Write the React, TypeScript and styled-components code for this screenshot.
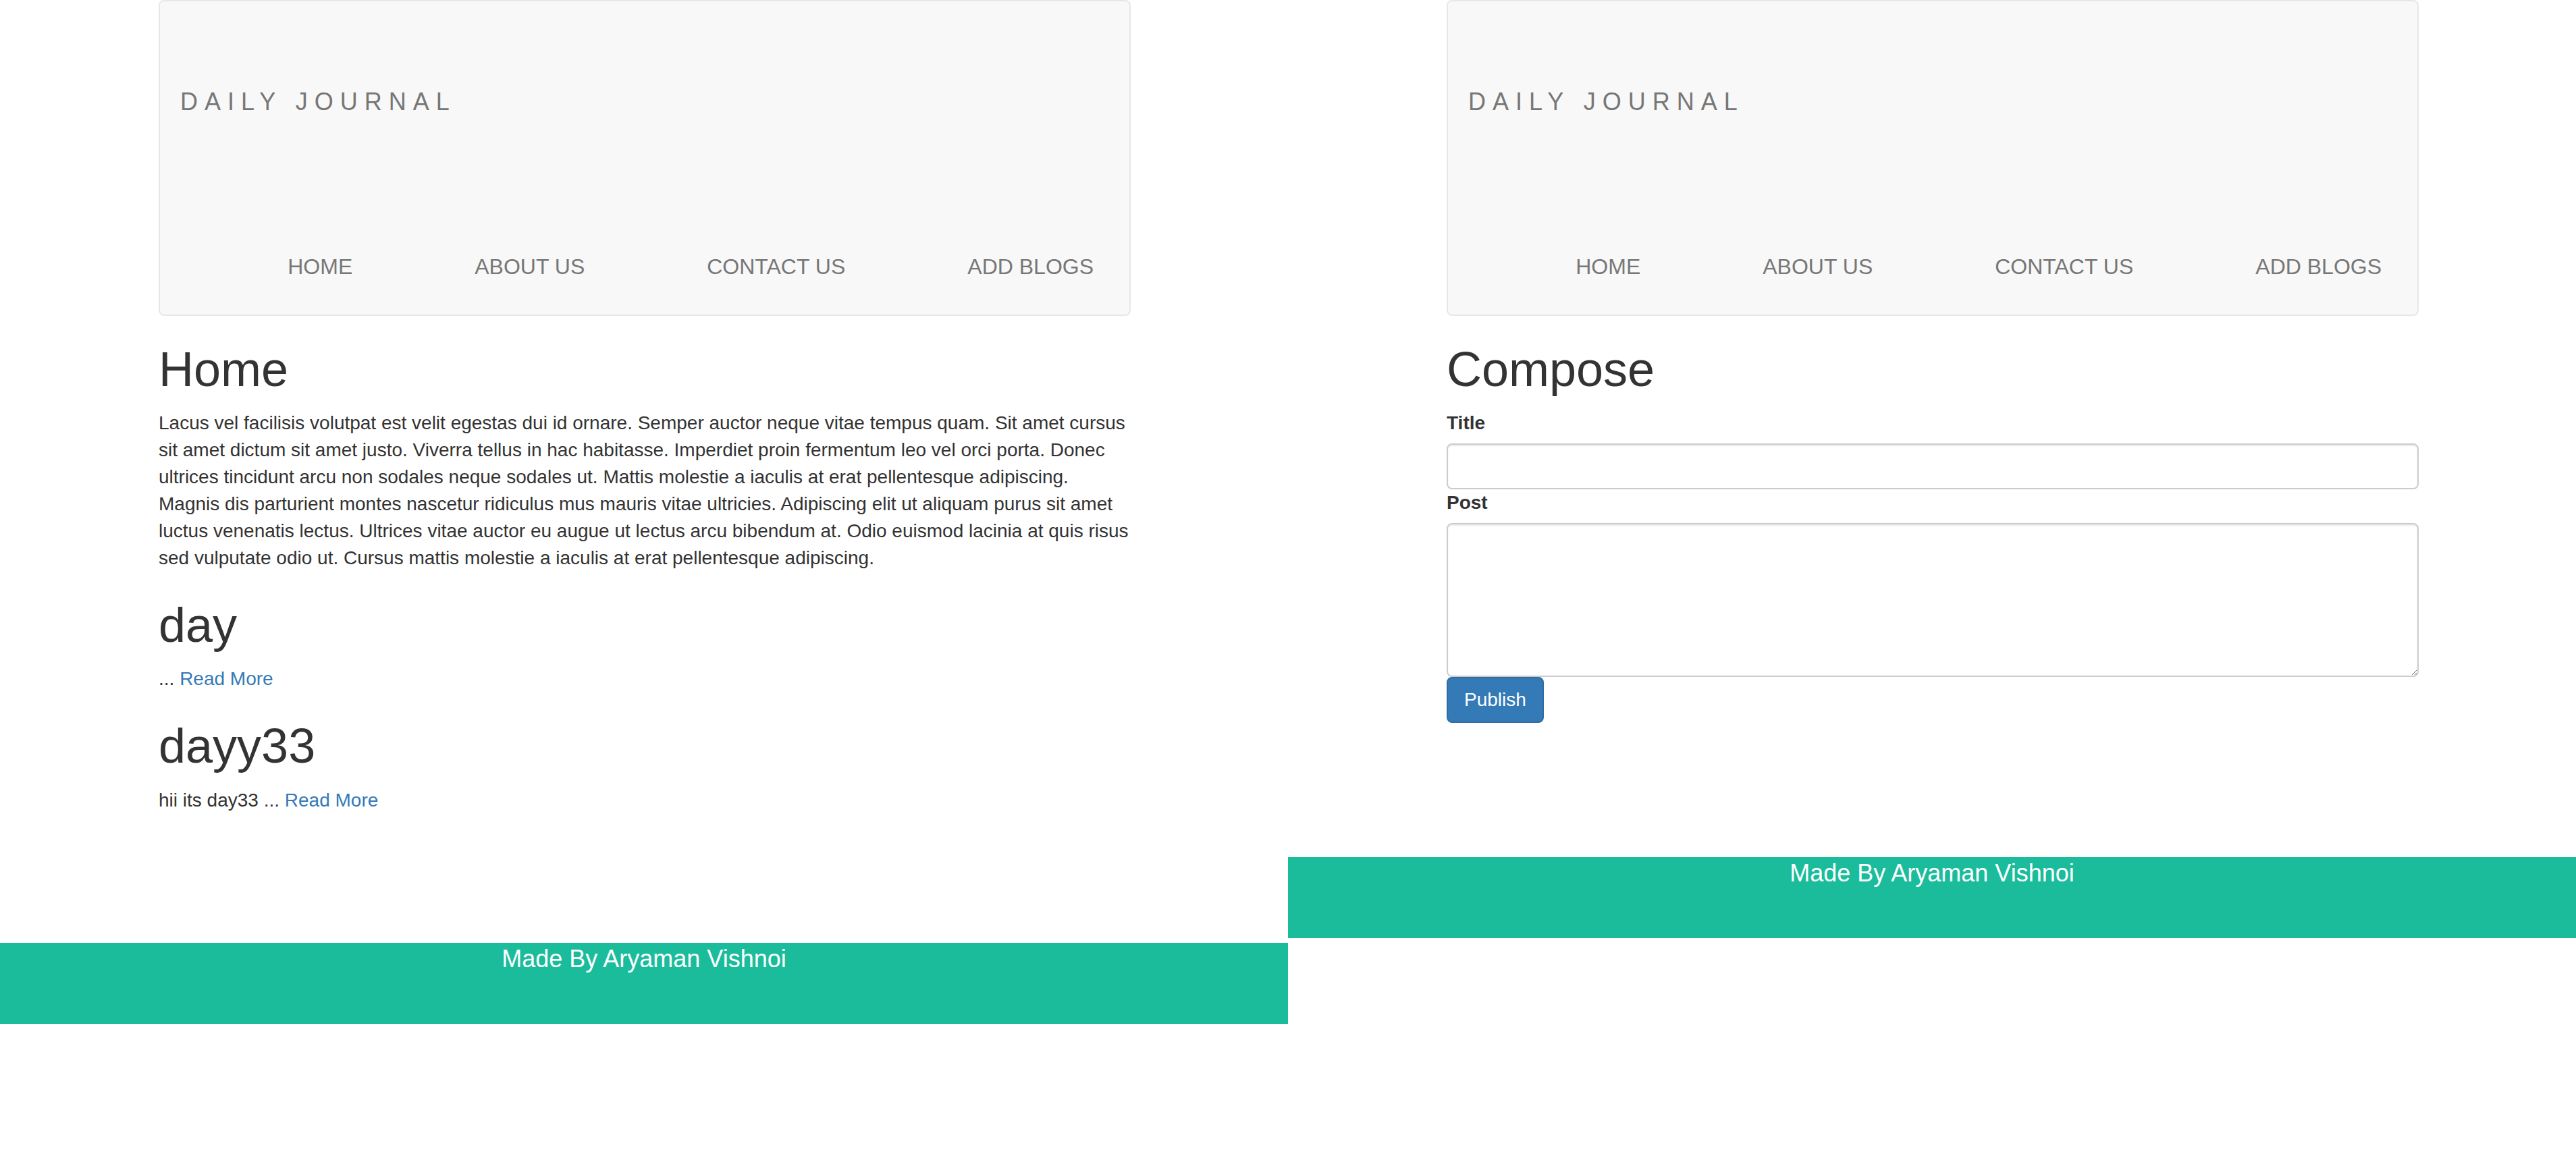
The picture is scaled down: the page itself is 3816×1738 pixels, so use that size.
import React from "react";
import styled, { createGlobalStyle } from "styled-components";

const GlobalStyle = createGlobalStyle`
  *, *::before, *::after { box-sizing: border-box; }
  html, body {
    margin: 0;
    padding: 0;
    background: #ffffff;
  }
  body {
    font-family: "Liberation Sans", Arial, Helvetica, sans-serif;
    font-size: 28px;
    line-height: 40px;
    color: #333333;
  }
`;

const Screen = styled.div`
  display: flex;
  width: 3816px;
  height: 1738px;
  overflow: hidden;
  background: #ffffff;
`;

const Panel = styled.div`
  flex: 0 0 1908px;
  width: 1908px;
`;

const Main = styled.main<{ $minHeight: number }>`
  display: flow-root;
  min-height: ${(p) => p.$minHeight}px;
`;

const Container = styled.div`
  width: 1440px;
  margin-left: 235px;
`;

const Navbar = styled.nav`
  display: flex;
  flex-direction: column;
  background: #f8f8f8;
  border: 2px solid #e7e7e7;
  border-radius: 8px;
  margin-bottom: 40px;
  padding: 129px 53px 51px 30px;
`;

const Brand = styled.a`
  align-self: flex-start;
  font-size: 36px;
  line-height: 40px;
  letter-spacing: 10px;
  color: #777777;
  text-decoration: none;
`;

const NavList = styled.ul`
  display: flex;
  justify-content: flex-end;
  gap: 181px;
  list-style: none;
  margin: 204px 0 0;
  padding: 0;
`;

const NavItem = styled.li`
  margin: 0;
`;

const NavLink = styled.a`
  display: block;
  font-size: 32px;
  line-height: 40px;
  color: #777777;
  text-decoration: none;
`;

const Heading = styled.h1`
  font-size: 72px;
  line-height: 1.1;
  font-weight: 400;
  margin: 40px 0 20px;
  color: #333333;
`;

const Paragraph = styled.p`
  margin: 0 0 20px;
`;

const ReadMore = styled.a`
  color: #337ab7;
  text-decoration: none;
`;

const Form = styled.form`
  margin: 0;
`;

const Label = styled.label`
  display: inline-block;
  max-width: 100%;
  margin-bottom: 10px;
  font-weight: 700;
`;

const fieldStyles = `
  display: block;
  width: 100%;
  padding: 12px 24px;
  font-family: inherit;
  font-size: 28px;
  line-height: 40px;
  color: #555555;
  background: #ffffff;
  border: 2px solid #cccccc;
  border-radius: 8px;
  box-shadow: inset 0 2px 2px rgba(0, 0, 0, 0.075);
  outline: none;
  margin: 0;
`;

const TextInput = styled.input`
  ${fieldStyles}
  height: 68px;
`;

const TextArea = styled.textarea`
  ${fieldStyles}
  height: 228px;
  resize: vertical;
`;

const Button = styled.button`
  display: inline-block;
  height: 68px;
  padding: 12px 24px;
  font-family: inherit;
  font-size: 28px;
  line-height: 40px;
  color: #ffffff;
  background: #337ab7;
  border: 2px solid #2e6da4;
  border-radius: 8px;
  cursor: pointer;
  vertical-align: top;
`;

const Footer = styled.footer`
  height: 120px;
  background: #1abc9c;
  text-align: center;
`;

const FooterText = styled.p`
  margin: 0;
  font-size: 36px;
  line-height: 48px;
  color: #ffffff;
`;

const navLinks = ["HOME", "ABOUT US", "CONTACT US", "ADD BLOGS"];

const Header: React.FC = () => (
  <Navbar>
    <Brand href="#">DAILY JOURNAL</Brand>
    <NavList>
      {navLinks.map((l) => (
        <NavItem key={l}>
          <NavLink href="#">{l}</NavLink>
        </NavItem>
      ))}
    </NavList>
  </Navbar>
);

const homeText =
  "Lacus vel facilisis volutpat est velit egestas dui id ornare. Semper auctor neque vitae tempus quam. Sit amet cursus sit amet dictum sit amet justo. Viverra tellus in hac habitasse. Imperdiet proin fermentum leo vel orci porta. Donec ultrices tincidunt arcu non sodales neque sodales ut. Mattis molestie a iaculis at erat pellentesque adipiscing. Magnis dis parturient montes nascetur ridiculus mus mauris vitae ultricies. Adipiscing elit ut aliquam purus sit amet luctus venenatis lectus. Ultrices vitae auctor eu augue ut lectus arcu bibendum at. Odio euismod lacinia at quis risus sed vulputate odio ut. Cursus mattis molestie a iaculis at erat pellentesque adipiscing.";

const posts = [
  { title: "day", body: "" },
  { title: "dayy33", body: "hii its day33 " },
];

const SiteFooter: React.FC = () => (
  <Footer>
    <FooterText>Made By Aryaman Vishnoi</FooterText>
  </Footer>
);

const HomePage: React.FC = () => (
  <Panel>
    <Main $minHeight={1397}>
      <Container>
        <Header />
        <Heading>Home</Heading>
        <Paragraph>{homeText}</Paragraph>
        {posts.map((p) => (
          <React.Fragment key={p.title}>
            <Heading>{p.title}</Heading>
            <Paragraph>
              {p.body}... <ReadMore href="#">Read More</ReadMore>
            </Paragraph>
          </React.Fragment>
        ))}
      </Container>
    </Main>
    <SiteFooter />
  </Panel>
);

const ComposePage: React.FC = () => (
  <Panel>
    <Main $minHeight={1270}>
      <Container>
        <Header />
        <Heading>Compose</Heading>
        <Form onSubmit={(e) => e.preventDefault()}>
          <Label htmlFor="postTitle">Title</Label>
          <TextInput id="postTitle" type="text" />
          <Label htmlFor="postBody">Post</Label>
          <TextArea id="postBody" rows={5} />
          <Button type="submit">Publish</Button>
        </Form>
      </Container>
    </Main>
    <SiteFooter />
  </Panel>
);

export default function App() {
  return (
    <>
      <GlobalStyle />
      <Screen>
        <HomePage />
        <ComposePage />
      </Screen>
    </>
  );
}
